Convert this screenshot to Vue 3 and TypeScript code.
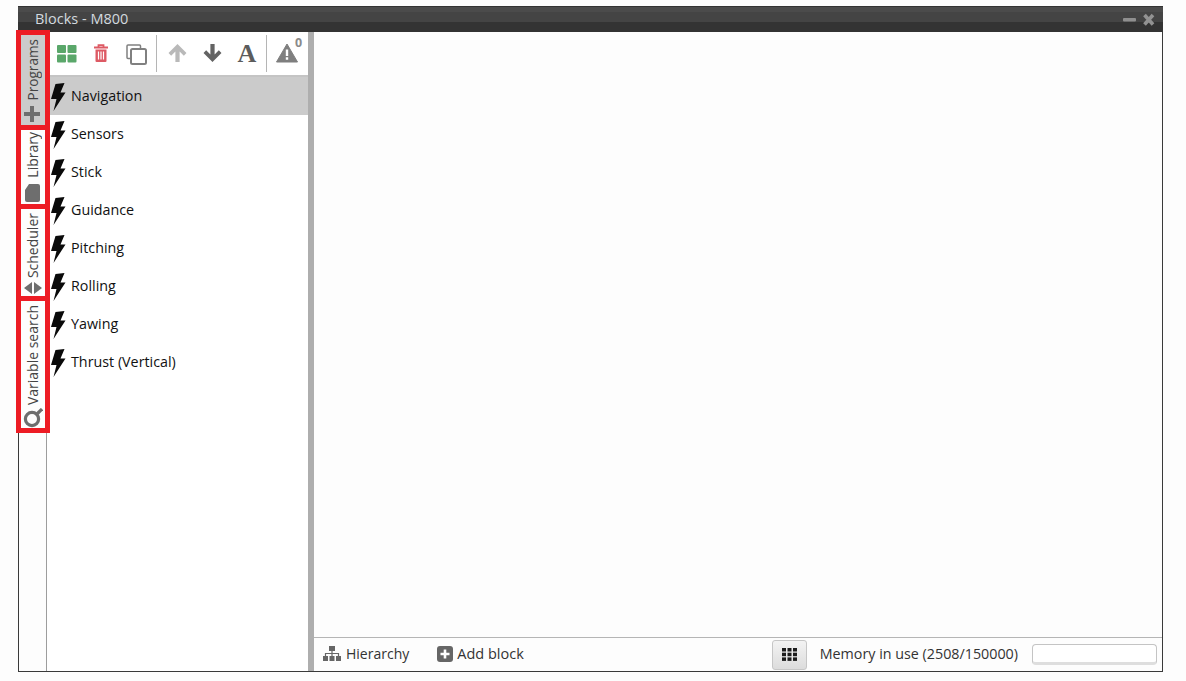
<script setup lang="ts">
const items: string[] = ['Navigation','Sensors','Stick','Guidance','Pitching','Rolling','Yawing','Thrust (Vertical)']
</script>

<template>
  <div class="page">
    <div class="window">
      <header class="titlebar">
        <span class="title">Blocks - M800</span>
        <span class="winbtns">
          <svg width="32" height="14" viewBox="0 0 32 14"><rect x="0" y="5" width="13" height="3.600" rx="1" fill="#8f8f8f"/><path d="M21.500 2 L30 11.500 M30 2 L21.500 11.500" stroke="#929292" stroke-width="3.600"/></svg>
        </span>
      </header>
      <div class="body">
        <nav class="rail">
          <div class="tab active t1">
            <span class="tabtext">Programs</span>
            <svg class="tabicon" width="16" height="16" viewBox="0 0 16 16"><path d="M6 0h4v6h6v4h-6v6H6v-6H0V6h6z" fill="#6e6e6e"/></svg>
          </div>
          <div class="tab t2">
            <span class="tabtext">Library</span>
            <svg class="tabicon" width="17" height="19" viewBox="0 0 17 19"><path d="M5 1h9a2 2 0 0 1 2 2v14a2 2 0 0 1-2 2H3a2 2 0 0 1-2-2V7z" fill="#6e6e6e"/></svg>
          </div>
          <div class="tab t3">
            <span class="tabtext">Scheduler</span>
            <svg class="tabicon" width="18" height="12" viewBox="0 0 18 12"><path d="M8 0v12L0 6zM10 0v12l8-6z" fill="#6e6e6e"/></svg>
          </div>
          <div class="tab t4">
            <span class="tabtext">Variable search</span>
            <svg class="tabicon" width="20" height="20" viewBox="0 0 20 20"><circle cx="9" cy="11" r="6.600" fill="none" stroke="#6e6e6e" stroke-width="3.200"/><path d="M14 6 L19 1" stroke="#6e6e6e" stroke-width="3.200"/></svg>
          </div>
        </nav>
        <section class="panel">
          <div class="toolbar">
            <svg class="tb i1" width="20" height="18" viewBox="0 0 20 18"><rect x="0" y="0" width="9" height="8" rx="1" fill="#5aa76a"/><rect x="10.500" y="0" width="9" height="8" rx="1" fill="#5aa76a"/><rect x="0" y="9.500" width="9" height="8" rx="1" fill="#5aa76a"/><rect x="10.500" y="9.500" width="9" height="8" rx="1" fill="#5aa76a"/></svg>
            <svg class="tb i2" width="16" height="19" viewBox="0 0 16 19"><path d="M1 3.500h14M5.500 3V1.200h5V3" fill="none" stroke="#dd5a64" stroke-width="1.800"/><path d="M2.500 5.500h11V17a1 1 0 0 1-1 1h-9a1 1 0 0 1-1-1z" fill="#dd5a64"/><path d="M5.500 7.500v8M8 7.500v8M10.500 7.500v8" stroke="#fff" stroke-width="1.200"/></svg>
            <svg class="tb i3" width="21" height="21" viewBox="0 0 21 21"><path d="M4 14.500H2a1 1 0 0 1-1-1V2a1 1 0 0 1 1-1h11.500a1 1 0 0 1 1 1v2" fill="none" stroke="#808080" stroke-width="1.500"/><rect x="5" y="5" width="15" height="15" rx="1.500" fill="none" stroke="#808080" stroke-width="2"/></svg>
            <span class="sep s1"></span>
            <svg class="tb i4" width="19" height="18" viewBox="0 0 18 17"><path d="M9 0l8.500 8.500-2.500 2.500-4-4V17H7V7l-4 4L.5 8.500z" fill="#b9b9b9"/></svg>
            <svg class="tb i5" width="19" height="18" viewBox="0 0 18 17"><path d="M9 17L.5 8.500 3 6l4 4V0h4v10l4-4 2.500 2.500z" fill="#636363"/></svg>
            <span class="tb i6">A</span>
            <span class="sep s2"></span>
            <span class="warn">
              <svg width="22" height="20" viewBox="0 0 22 19"><path d="M11 0.500 L21.500 18.500 H0.500 Z" fill="#7f7f7f" stroke="#7f7f7f" stroke-linejoin="round"/><path d="M9.800 6h2.400v6.500H9.800zM9.800 13.800h2.400v2.400H9.800z" fill="#fff"/></svg>
              <sup class="warnnum">0</sup>
            </span>
          </div>
          <ul class="list">
            <li v-for="(item, i) in items" :key="item" :class="['row', { selected: i === 0 }]">
              <svg class="bolt" width="16" height="30" viewBox="0 0 16 30"><path d="M5.500 2 L14.500 1 L10.500 10.500 L15.500 10.500 L3.500 29 L6.500 17 L1 17 Z" fill="#0a0a0a"/></svg>
              <span class="label">{{ item }}</span>
            </li>
          </ul>
        </section>
        <div class="splitter"></div>
        <main class="main">
          <div class="canvas"></div>
          <footer class="status">
            <span class="action hier">
              <svg width="18" height="15" viewBox="0 0 18 15"><path d="M6 0h6v5H6zM0 10h5v5H0zM6.500 10h5v5h-5zM13 10h5v5h-5z" fill="#666"/><path d="M9 5v5M2.500 10V7.500h13V10" fill="none" stroke="#666" stroke-width="1.200"/></svg>
              Hierarchy
            </span>
            <span class="action add">
              <svg width="16" height="16" viewBox="0 0 16 16"><rect width="16" height="16" rx="3" fill="#666"/><path d="M6.700 3.500h2.600v3.200h3.200v2.600H9.300v3.200H6.700V9.300H3.500V6.700h3.200z" fill="#fff"/></svg>
              Add block
            </span>
            <span class="spacer"></span>
            <button class="gridbtn" type="button">
              <svg width="15" height="13" viewBox="0 0 15 13"><g fill="#1c1c1c"><rect x="0" y="0" width="4" height="3.500"/><rect x="5.500" y="0" width="4" height="3.500"/><rect x="11" y="0" width="4" height="3.500"/><rect x="0" y="4.700" width="4" height="3.500"/><rect x="5.500" y="4.700" width="4" height="3.500"/><rect x="11" y="4.700" width="4" height="3.500"/><rect x="0" y="9.400" width="4" height="3.500"/><rect x="5.500" y="9.400" width="4" height="3.500"/><rect x="11" y="9.400" width="4" height="3.500"/></g></svg>
            </button>
            <span class="memory">Memory in use (2508/150000)</span>
            <span class="progress"></span>
          </footer>
        </main>
      </div>
    </div>
  </div>
</template>

<style>
html, body { margin: 0; background: #fdfdfd; }
</style>

<style scoped>
.page {
  width: 1186px;
  height: 681px;
  padding: 6px 23px 9px 18px;
  box-sizing: border-box;
  background: #fdfdfd;
  font-family: "Open Sans", "Noto Sans", sans-serif;
  font-size: 14px;
  color: #111;
  overflow: hidden;
}
.window {
  height: 100%;
  display: flex;
  flex-direction: column;
  box-sizing: border-box;
  border-right: 1px solid #3a3a3a;
  border-bottom: 1px solid #3a3a3a;
  border-left: 1px solid #3a3a3a;
}
.titlebar {
  height: 26px;
  margin: 0 -1px;
  flex: none;
  display: flex;
  align-items: center;
  justify-content: space-between;
  padding: 0 8px 0 17px;
  background: linear-gradient(#333 0, #333 1px, #4b4b4b 1px, #4b4b4b 6px, #444 6px, #444 16px, #333 16px, #333 100%);
  box-sizing: border-box;
}
.title { color: #d2d9df; font-size: 14.500px; position: relative; top: -1px; }
.winbtns { display: flex; margin-top: 1px; }
.body { flex: 1; display: flex; min-height: 0; }
.rail {
  width: 28px;
  flex: none;
  box-sizing: border-box;
  border-right: 1px solid #9d9d9d;
  display: flex;
  flex-direction: column;
  position: relative;
}
.tab {
  position: relative;
  z-index: 1;
  width: 34px;
  flex: none;
  margin-left: -3px;
  box-sizing: border-box;
  border: 5px solid #ed1c24;
  background: #fdfdfd;
  display: flex;
  flex-direction: column;
  align-items: center;
  justify-content: flex-end;
  color: #444;
}
.tab.active { background: #cbcbcb; }
.t1 { height: 100px; margin-top: -2px; padding-bottom: 3px; }
.t2 { height: 84px; margin-top: -5px; padding-bottom: 2px; }
.t3 { height: 97px; margin-top: -5px; padding-bottom: 2px; }
.t4 { height: 137px; margin-top: -5px; padding-bottom: 0; }
.tabtext {
  writing-mode: vertical-rl;
  transform: rotate(180deg);
  font-size: 14px;
  line-height: 20px;
  white-space: nowrap;
}
.t1 .tabtext { font-size: 13.600px; }
.tabicon { margin-left: -2px; }
.t1 .tabicon { margin-top: 6px; }
.t2 .tabicon { margin-top: 5px; }
.t3 .tabicon { margin-top: 4px; margin-left: 0; }
.t4 .tabicon { margin-top: 3px; margin-left: 0; }
.panel {
  width: 261px;
  flex: none;
  display: flex;
  flex-direction: column;
  background: #fff;
}
.toolbar {
  height: 45px;
  flex: none;
  box-sizing: border-box;
  border-bottom: 2px solid #c4c4c4;
  display: flex;
  align-items: center;
  position: relative;
}
.tb { flex: none; }
.i1 { margin-left: 10px; }
.i2 { margin-left: 16px; }
.i3 { margin-left: 17px; margin-top: 1px; }
.sep { width: 1px; height: 37px; background: #b5b5b5; flex: none; }
.s1 { margin-left: 9px; }
.i4 { margin-left: 11px; margin-top: -2px; }
.i5 { margin-left: 16px; margin-top: -2px; }
.i6 {
  margin-left: 15px;
  width: 20px;
  text-align: center;
  font-family: "Liberation Serif", serif;
  font-weight: 700;
  font-size: 26px;
  line-height: 26px;
  color: #5c5c5c;
}
.s2 { margin-left: 9px; }
.warn { margin-left: 9px; position: relative; display: flex; margin-top: -2px; }
.warnnum {
  position: absolute;
  left: 19px;
  top: -7px;
  font-size: 12.500px;
  font-weight: 700;
  line-height: 14px;
  color: #8a8a8a;
}
.list { list-style: none; margin: 0; padding: 0; flex: 1; }
.row {
  height: 38px;
  display: flex;
  align-items: center;
  padding-left: 3px;
  box-sizing: border-box;
}
.row.selected { background: #cbcbcb; }
.bolt { flex: none; margin-top: 2px; }
.label { margin-left: 5px; font-size: 14.300px; white-space: nowrap; position: relative; top: -1px; }
.splitter { width: 6px; flex: none; background: #aeaeae; }
.main { flex: 1; min-width: 0; display: flex; flex-direction: column; background: #fdfdfd; }
.canvas { flex: 1; }
.status {
  height: 34px;
  flex: none;
  box-sizing: border-box;
  border-top: 1px solid #b5b5b5;
  display: flex;
  align-items: center;
  padding-left: 9px;
  padding-right: 5px;
  color: #333;
  font-size: 14.200px;
}
.action { display: inline-flex; align-items: center; gap: 5px; white-space: nowrap; position: relative; top: -1px; }
.hier { font-size: 14px; }
.add { margin-left: 28px; gap: 4px; font-size: 14.500px; }
.spacer { flex: 1; }
.gridbtn {
  width: 35px;
  height: 30px;
  padding: 0;
  border: 1px solid #c6c6c6;
  border-radius: 3px;
  background: linear-gradient(#f3f3f3, #dcdcdc);
  display: flex;
  align-items: center;
  justify-content: center;
}
.memory { margin-left: 13px; font-size: 14.300px; white-space: nowrap; color: #333; position: relative; top: -1px; }
.progress {
  margin-left: 14px;
  width: 125px;
  height: 21px;
  box-sizing: border-box;
  border: 1px solid #c4c4c4;
  border-bottom: 3px solid #dedede;
  border-radius: 4px;
  background: #fff;
}
</style>
